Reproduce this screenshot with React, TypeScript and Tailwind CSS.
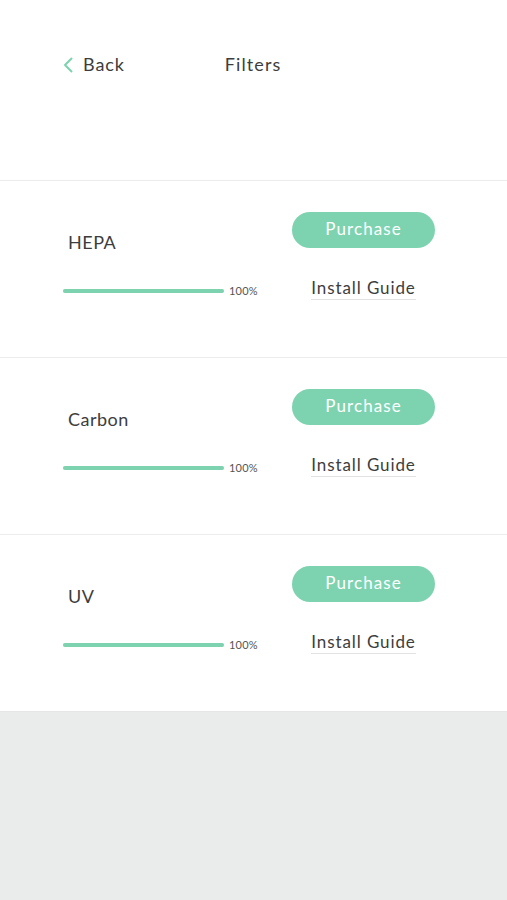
const FILTERS = ["HEPA", "Carbon", "UV"];

function FilterRow({ name, percent }: { name: string; percent: number }) {
  return (
    <div className="flex h-[177px] border-t border-[#ececec] pl-[63px] pr-[72px] pt-[31px]">
      <div className="flex w-[200px] flex-col">
        <div className="mt-[19px] pl-[5px] text-[18px] leading-[22px] tracking-[0.5px] text-[#3d3d3d]">{name}</div>
        <div className="mt-[32px] flex items-center">
          <div className="h-[4px] w-[161px] rounded-full bg-[#e5e5e5]">
            <div className="h-full rounded-full bg-[#7dd3b0]" style={{ width: `${percent}%` }} />
          </div>
          <span className="ml-[5px] text-[11px] leading-none tracking-[0.2px] text-[#555]">{percent}%</span>
        </div>
      </div>
      <div className="ml-auto flex w-[143px] flex-col items-center">
        <button className="h-[36px] w-[143px] rounded-full bg-[#7dd3b0] pb-[3px] text-[17px] leading-none tracking-[1.1px] text-white">
          Purchase
        </button>
        <span className="mt-[30px] border-b border-[#e2e2e2] pb-[1px] text-[17px] leading-[20px] tracking-[0.9px] text-[#3d3d3d]">
          Install Guide
        </span>
      </div>
    </div>
  );
}

export default function App() {
  return (
    <div className="flex h-[900px] w-[507px] flex-col bg-white font-['Lato',sans-serif]">
      <div className="flex h-[180px] items-start pl-[63px] pt-[53px]">
        <div className="flex items-center">
          <svg width="10" height="16" viewBox="0 0 10 16" fill="none" className="mt-[1px]">
            <path d="M8.5 1.5 L2 8 L8.5 14.5" stroke="#7dd3b0" strokeWidth="2" strokeLinecap="round" strokeLinejoin="round" />
          </svg>
          <span className="ml-[10px] text-[18px] leading-[22px] tracking-[0.9px] text-[#3d3d3d]">Back</span>
        </div>
        <span className="ml-[100px] text-[18px] leading-[22px] tracking-[1.1px] text-[#3d3d3d]">Filters</span>
      </div>
      {FILTERS.map((f) => (
        <FilterRow key={f} name={f} percent={100} />
      ))}
      <div className="flex-1 border-t border-[#e4e7e6] bg-[#e9eceb]" />
    </div>
  );
}
